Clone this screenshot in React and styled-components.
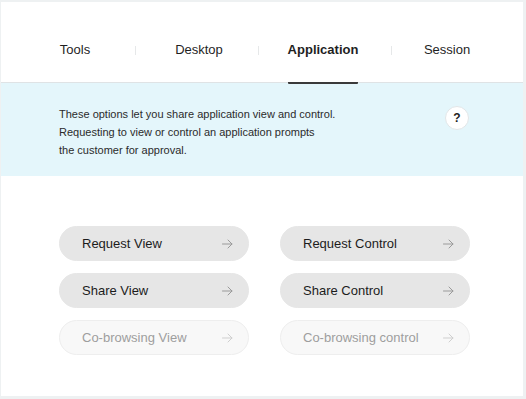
import React from "react";
import styled, { createGlobalStyle } from "styled-components";

const Global = createGlobalStyle`
  html, body { margin: 0; padding: 0; background: #eef1f2; }
  body { font-family: "Liberation Sans", Arial, sans-serif; }
  #root { width: 526px; height: 399px; }
`;

const Card = styled.div`
  margin: 2px 3px 0 1px;
  width: 522px;
  height: 394px;
  background: #ffffff;
  display: flex;
  flex-direction: column;
  box-sizing: border-box;
`;

const TabBar = styled.div`
  height: 81px;
  display: flex;
  padding: 0 14px 0 12px;
  border-bottom: 1px solid #dfe3e5;
  box-sizing: border-box;
`;

const TabCell = styled.div`
  flex: 1;
  display: flex;
  justify-content: center;
  position: relative;
  &:not(:last-child)::after {
    content: "";
    position: absolute;
    right: ${(p) => p.$sep}px;
    top: 44px;
    width: 1px;
    height: 9px;
    background: #e6e8e9;
  }
`;

const TabLabel = styled.div`
  display: flex;
  align-items: center;
  padding-top: 15px;
  box-sizing: border-box;
  height: 82px;
  font-size: 13px;
  color: #1f1f1f;
  font-weight: ${(p) => (p.$active ? 700 : 400)};
  border-bottom: 2px solid ${(p) => (p.$active ? "#3a3a3a" : "transparent")};
  border-radius: 0 0 1px 1px;
  position: relative;
  z-index: 1;
`;

const Banner = styled.div`
  background: #e4f6fb;
  display: flex;
  justify-content: space-between;
  align-items: flex-start;
  padding: 22px 54px 17px 58px;
`;

const BannerText = styled.p`
  margin: 0;
  font-size: 11px;
  line-height: 18px;
  color: #2b2b2b;
`;

const HelpButton = styled.div`
  width: 24px;
  height: 24px;
  margin-top: 1px;
  border-radius: 50%;
  background: #ffffff;
  border: 1px solid #e2e6e8;
  box-sizing: border-box;
  display: flex;
  align-items: center;
  justify-content: center;
  font-size: 12px;
  font-weight: 700;
  color: #222;
`;

const Grid = styled.div`
  display: grid;
  grid-template-columns: 190px 190px;
  column-gap: 31px;
  row-gap: 12px;
  padding: 50px 0 0 58px;
`;

const ActionButton = styled.div`
  height: 35px;
  border-radius: 18px;
  box-sizing: border-box;
  display: flex;
  align-items: center;
  justify-content: space-between;
  padding: 0 15px 0 22px;
  font-size: 13px;
  background: ${(p) => (p.$disabled ? "#f8f8f8" : "#e6e6e6")};
  border: 1px solid ${(p) => (p.$disabled ? "#eeeeee" : "#e6e6e6")};
  color: ${(p) => (p.$disabled ? "#9e9e9e" : "#1c1c1c")};
`;

const Arrow = ({ color }) => (
  <svg width="11" height="10" viewBox="0 0 11 10" fill="none">
    <path d="M0.5 5H10M6 1L10 5L6 9" stroke={color} strokeWidth="1" strokeLinecap="round" strokeLinejoin="round" />
  </svg>
);

const tabs = [
  { label: "Tools", sep: 1 },
  { label: "Desktop", sep: 2 },
  { label: "Application", active: true, sep: -7 },
  { label: "Session", sep: 0 },
];

const actions = [
  { label: "Request View" },
  { label: "Request Control" },
  { label: "Share View" },
  { label: "Share Control" },
  { label: "Co-browsing View", disabled: true },
  { label: "Co-browsing control", disabled: true },
];

export default function App() {
  return (
    <>
      <Global />
      <Card>
        <TabBar>
          {tabs.map((t) => (
            <TabCell key={t.label} $sep={t.sep}>
              <TabLabel $active={t.active}>{t.label}</TabLabel>
            </TabCell>
          ))}
        </TabBar>
        <Banner>
          <BannerText>
            These options let you share application view and control.
            <br />
            Requesting to view or control an application prompts
            <br />
            the customer for approval.
          </BannerText>
          <HelpButton>?</HelpButton>
        </Banner>
        <Grid>
          {actions.map((a) => (
            <ActionButton key={a.label} $disabled={a.disabled}>
              <span>{a.label}</span>
              <Arrow color={a.disabled ? "#cfcfcf" : "#9a9a9a"} />
            </ActionButton>
          ))}
        </Grid>
      </Card>
    </>
  );
}
